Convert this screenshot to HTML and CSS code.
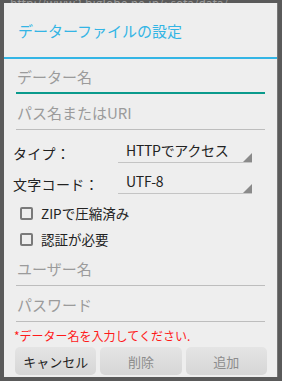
FILE: index.html
```html
<!DOCTYPE html>
<html lang="ja">
  <head>
    <meta charset="UTF-8" />
    <meta name="viewport" content="width=device-width, initial-scale=1.0" />
    <title>データーファイルの設定</title>
    <link rel="stylesheet" href="styles.css">
  </head>
  <body>
    <div class="behind">http://www2.biglobe.ne.jp/~sota/data/</div>

    <div class="dialog">
      <div class="title">データーファイルの設定</div>

      <form class="form">
        <div class="field focused">
          <input type="text" name="name" placeholder="データー名" />
        </div>
        <div class="field">
          <input type="text" name="path" placeholder="パス名またはURI" />
        </div>

        <div class="row">
          <span class="label">タイプ：</span>
          <div class="spinner">HTTPでアクセス</div>
        </div>
        <div class="row">
          <span class="label">文字コード：</span>
          <div class="spinner">UTF-8</div>
        </div>

        <label class="check first"><span class="box"></span>ZIPで圧縮済み</label>
        <label class="check"><span class="box"></span>認証が必要</label>

        <div class="field user">
          <input type="text" name="user" placeholder="ユーザー名" />
        </div>
        <div class="field">
          <input type="password" name="pass" placeholder="パスワード" />
        </div>

        <p class="error">*データー名を入力してください.</p>
      </form>

      <div class="buttons">
        <button class="btn">キャンセル</button>
        <button class="btn off">削除</button>
        <button class="btn off">追加</button>
      </div>
    </div>
  </body>
</html>
```

FILE: styles.css
```css
* {
  padding: 0;
  margin: 0;
  box-sizing: border-box;
}
body {
  width: 282px;
  height: 381px;
  overflow: hidden;
  background-color: #5a5a5a;
  font-family: "Noto Sans CJK JP", Roboto, sans-serif;
  color: #222;
}
.behind {
  height: 3px;
  overflow: hidden;
  padding-left: 10px;
  color: #9a9a9a;
  font-size: 12px;
  line-height: 6px;
}
.dialog {
  width: 273px;
  height: 374px;
  margin-left: 4px;
  background: #eeeeee;
  display: flex;
  flex-direction: column;
  box-shadow: 1px 0 0 #777;
}
.title {
  height: 56px;
  padding-left: 14px;
  display: flex;
  align-items: center;
  color: #33b5e5;
  font-size: 15px;
  border-bottom: 2px solid #33b5e5;
}
.form {
  padding: 0 12px;
  display: flex;
  flex-direction: column;
}
.field {
  height: 36px;
  padding-top: 2px;
  display: flex;
  border-bottom: 1px solid #bdbdbd;
}
.field.focused {
  height: 35px;
  border-bottom: 2px solid #0a9a8c;
}
.field.user {
  margin-top: -2px;
}
.field input {
  width: 100%;
  border: none;
  outline: none;
  background: transparent;
  padding-left: 1px;
  font-family: inherit;
  font-size: 15px;
  color: #222;
}
.field input::placeholder {
  color: #9b9b9b;
}
.row {
  height: 31px;
  display: flex;
  align-items: center;
}
.row:first-of-type,
.field + .row {
  margin-top: 7px;
}
.label {
  flex: 0 0 105px;
  margin-left: -3px;
  font-size: 14px;
  letter-spacing: 0.3px;
}
.spinner {
  position: relative;
  width: 134px;
  height: 25px;
  margin-bottom: 4px;
  padding-left: 8px;
  display: flex;
  align-items: center;
  font-size: 14px;
  letter-spacing: -0.3px;
  border-bottom: 1px solid #c4c4c4;
}
.spinner::after {
  content: "";
  position: absolute;
  right: 0;
  bottom: 0;
  border-left: 9px solid transparent;
  border-bottom: 9px solid #8a8a8a;
}
.check {
  height: 26px;
  padding-left: 4px;
  display: flex;
  align-items: center;
  gap: 8px;
  font-size: 13.5px;
}
.check.first {
  margin-top: 1px;
}
.box {
  width: 13px;
  height: 13px;
  border: 2px solid #7a7a7a;
  border-radius: 2px;
}
.error {
  height: 16px;
  margin-top: 6px;
  margin-left: -2px;
  color: #ff1a1a;
  font-size: 12px;
  line-height: 16px;
}
.buttons {
  display: flex;
  gap: 4px;
  padding: 0 10px 0 11px;
  margin-top: 3px;
}
.btn {
  flex: 1;
  height: 28px;
  border: none;
  border-radius: 5px;
  background: linear-gradient(#e4e4e4, #d6d6d6);
  font-family: inherit;
  font-size: 13px;
  color: #1e1e1e;
}
.btn.off {
  color: #8c8c8c;
}
```
